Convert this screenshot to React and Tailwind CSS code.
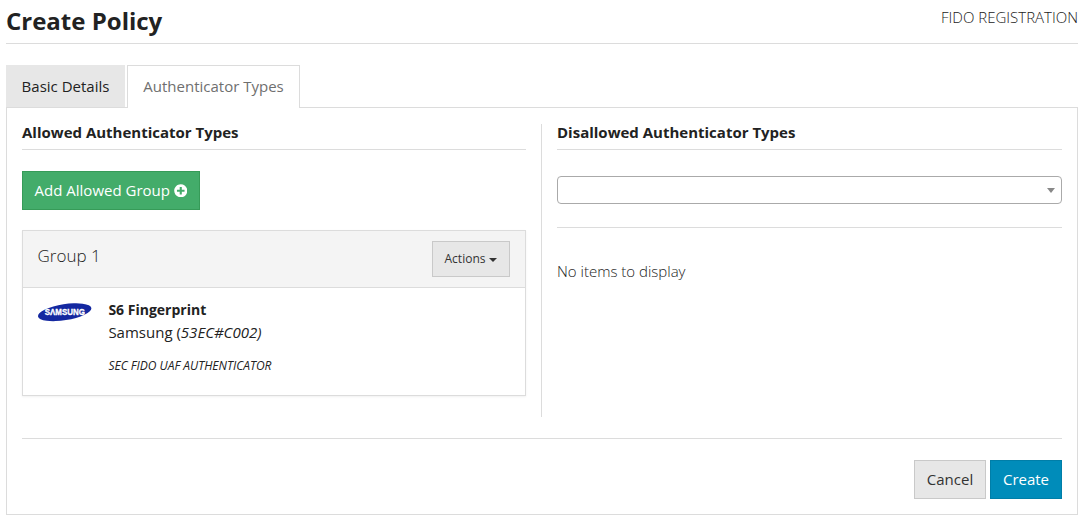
import React from "react";
import { FaPlusCircle } from "react-icons/fa";

function SamsungLogo() {
  return (
    <svg className="mt-[14px] h-[20px] w-[54px] shrink-0" viewBox="0 0 54 20" role="img" aria-label="Samsung">
      <ellipse cx="26.7" cy="10.2" rx="27" ry="8" fill="#1428a0" transform="rotate(-9 26.7 10.2)" />
      <text
        x="6.8"
        y="13.4"
        textLength="40"
        lengthAdjust="spacingAndGlyphs"
        fill="#fff"
        stroke="#fff"
        strokeWidth="0.35"
        fontFamily="Liberation Sans, sans-serif"
        fontWeight="700"
        fontSize="9"
      >
        SΛMSUNG
      </text>
    </svg>
  );
}

function Tabs() {
  return (
    <nav className="flex h-[43px] gap-[2px] border-b border-[#dcdcdc]">
      <button className="h-[42px] w-[119px] bg-[#e7e7e7] text-[#222]">Basic Details</button>
      <button className="h-[43px] w-[173px] border border-b-0 border-[#dcdcdc] bg-white pb-[2px] text-[#6f6f6f]">
        Authenticator Types
      </button>
    </nav>
  );
}

function GroupCard() {
  return (
    <section className="mt-[20px] h-[166px] border border-[#dcdcdc] shadow-[0_1px_2px_rgba(0,0,0,0.06)]">
      <header className="flex h-[57px] items-start justify-between border-b border-[#dcdcdc] bg-[#f4f4f4] pr-[15px] pl-[14.5px]">
        <h3 className="pt-[12px] text-[17px] leading-[26px] font-light text-[#222]">Group 1</h3>
        <button className="mt-[10px] flex h-[36px] w-[78px] items-center justify-center gap-[4px] border border-[#c9c9c9] bg-[#e7e7e7] text-[12px] text-[#333]">
          Actions
          <svg className="mt-[2px] h-[4px] w-[8px]" viewBox="0 0 8 4">
            <path d="M0 0h8L4 4z" fill="#333" />
          </svg>
        </button>
      </header>
      <div className="flex gap-[16.4px] pl-[15px]">
        <SamsungLogo />
        <div className="pt-[10px] text-[15px] leading-[23px] text-[#222]">
          <p className="text-[14px] font-bold">S6 Fingerprint</p>
          <p>
            Samsung (<em>53EC#C002)</em>
          </p>
          <p className="mt-[10px] text-[12px] italic">SEC FIDO UAF AUTHENTICATOR</p>
        </div>
      </div>
    </section>
  );
}

export default function App() {
  return (
    <div className="h-[521px] w-[1087px] bg-white pr-[9px] pl-[6px] font-['Open_Sans',sans-serif] text-[15px] text-[#222]">
      <header className="flex h-[44px] items-start justify-between border-b border-[#dcdcdc]">
        <h1 className="pt-[5px] text-[24px] leading-[32px] font-bold">Create Policy</h1>
        <span className="pt-[6px] leading-[22px] font-light">FIDO REGISTRATION</span>
      </header>
      <div className="mt-[21px]">
        <Tabs />
        <main className="h-[407px] border border-t-0 border-[#dcdcdc] px-[15px] pt-[16px]">
          <div className="flex h-[293px]">
            <div className="w-[504px]">
              <h2 className="h-[26px] border-b border-[#dcdcdc] text-[15px] leading-[17px] font-bold">
                Allowed Authenticator Types
              </h2>
              <button className="mt-[21px] flex h-[39px] w-[178px] items-center justify-center gap-[4px] border border-[#369b58] bg-[#43ac6a] text-white">
                Add Allowed Group
                <FaPlusCircle className="size-[13.5px]" />
              </button>
              <GroupCard />
            </div>
            <div className="ml-[15px] w-px bg-[#dcdcdc]" />
            <div className="ml-[15px] w-[505px]">
              <h2 className="h-[26px] border-b border-[#dcdcdc] text-[15px] leading-[17px] font-bold">
                Disallowed Authenticator Types
              </h2>
              <button
                aria-label="Disallowed types"
                className="mt-[26px] flex h-[28px] w-full items-center justify-end rounded-[4px] border border-[#aaa] pr-[6px]"
              >
                <svg className="h-[5px] w-[8px]" viewBox="0 0 8 5">
                  <path d="M0 0h8L4 5z" fill="#888" />
                </svg>
              </button>
              <div className="mt-[23px] h-px bg-[#dcdcdc]" />
              <p className="mt-[31px] leading-[24px] font-light">No items to display</p>
            </div>
          </div>
          <div className="mt-[21px] h-px bg-[#dcdcdc]" />
          <div className="mt-[21px] flex justify-end gap-[4px]">
            <button className="h-[39px] w-[72px] border border-[#c9c9c9] bg-[#e7e7e7] text-[#333]">Cancel</button>
            <button className="h-[39px] w-[72px] border border-[#007ea8] bg-[#008cba] text-white">Create</button>
          </div>
        </main>
      </div>
    </div>
  );
}
